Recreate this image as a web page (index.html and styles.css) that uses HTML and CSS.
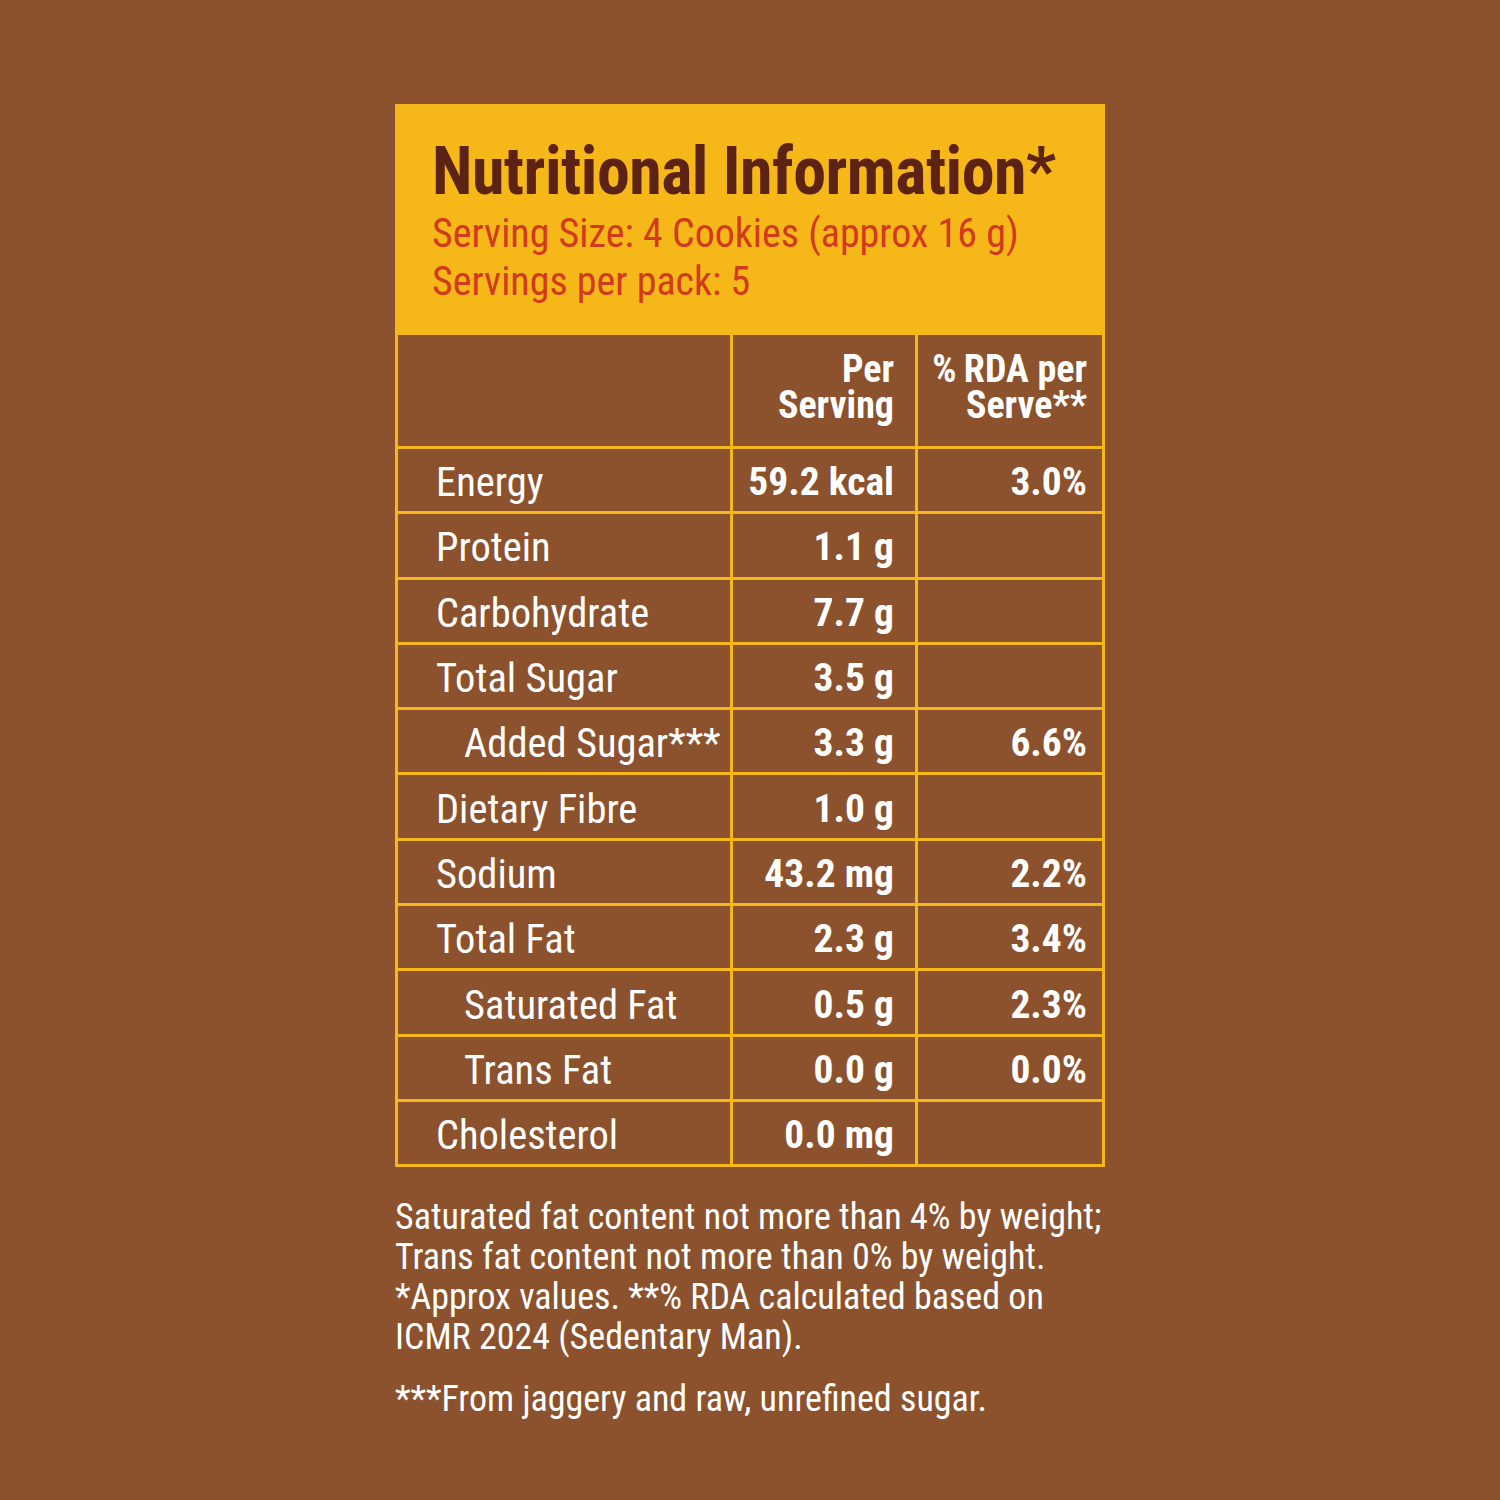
FILE: index.html
```html
<!DOCTYPE html>
<html>
<head>
<meta charset="utf-8">
<link rel="stylesheet" href="styles.css">
</head>
<body>
<div class="page">
  <div class="panel">
    <div class="head">
      <h1 class="title">Nutritional Information*</h1>
      <p class="sub">Serving Size: 4 Cookies (approx 16 g)</p>
      <p class="sub">Servings per pack: 5</p>
    </div>
    <table class="facts">
      <tr class="hdr">
        <th class="c1"></th>
        <th class="c2"><span class="hl">Per</span><span class="hl">Serving</span></th>
        <th class="c3"><span class="hl">%&thinsp;RDA per</span><span class="hl">Serve**</span></th>
      </tr>
      <tr><td class="c1">Energy</td><td class="c2">59.2 kcal</td><td class="c3">3.0%</td></tr>
      <tr><td class="c1">Protein</td><td class="c2">1.1 g</td><td class="c3"></td></tr>
      <tr><td class="c1">Carbohydrate</td><td class="c2">7.7 g</td><td class="c3"></td></tr>
      <tr><td class="c1">Total Sugar</td><td class="c2">3.5 g</td><td class="c3"></td></tr>
      <tr><td class="c1 ind">Added Sugar***</td><td class="c2">3.3 g</td><td class="c3">6.6%</td></tr>
      <tr><td class="c1">Dietary Fibre</td><td class="c2">1.0 g</td><td class="c3"></td></tr>
      <tr><td class="c1">Sodium</td><td class="c2">43.2 mg</td><td class="c3">2.2%</td></tr>
      <tr><td class="c1">Total Fat</td><td class="c2">2.3 g</td><td class="c3">3.4%</td></tr>
      <tr><td class="c1 ind">Saturated Fat</td><td class="c2">0.5 g</td><td class="c3">2.3%</td></tr>
      <tr><td class="c1 ind">Trans Fat</td><td class="c2">0.0 g</td><td class="c3">0.0%</td></tr>
      <tr><td class="c1">Cholesterol</td><td class="c2">0.0 mg</td><td class="c3"></td></tr>
    </table>
    <div class="notes">
      <p>Saturated fat content not more than 4% by weight;<br>Trans fat content not more than 0% by weight.<br>*Approx values. **% RDA calculated based on<br>ICMR 2024 (Sedentary Man).</p>
      <p class="last">***From jaggery and raw, unrefined sugar.</p>
    </div>
  </div>
</div>
</body>
</html>
```
FILE: styles.css
```css
html, body {
  margin: 0;
  padding: 0;
  background: #8b522d;
}
.page {
  width: 1500px;
  height: 1500px;
  background: #8b522d;
  font-family: Roboto, "Liberation Sans", sans-serif;
  font-stretch: 75%;
  color: #fff;
  display: flex;
  justify-content: center;
  padding-top: 104px;
  box-sizing: border-box;
}
.panel {
  width: 710px;
  display: flex;
  flex-direction: column;
}
.head {
  background: #f6b719;
  height: 229px;
  box-sizing: border-box;
  padding: 30px 0 0 37px;
}
.title {
  margin: 0;
  font-size: 66px;
  font-weight: 700;
  color: #5c2314;
  line-height: 76px;
  letter-spacing: -0.5px;
}
.sub {
  margin: 0;
  font-size: 40px;
  line-height: 48px;
  color: #d13a1c;
}
.facts {
  border-collapse: collapse;
  width: 710px;
  table-layout: fixed;
  margin-top: -1px;
}
.facts td, .facts th {
  border: 3px solid #f6b719;
  height: 58.3px;
  padding: 0;
  font-size: 40.5px;
  line-height: 44px;
}
.facts .c1 {
  width: 335px;
  padding-left: 38px;
  font-weight: 400;
  text-align: left;
}
.facts .c1.ind { padding-left: 66px; }
.facts .c2 {
  width: 185px;
  text-align: right;
  padding-right: 21px;
  font-weight: 700;
  font-size: 39.5px;
}
.facts .c3 {
  text-align: right;
  padding-right: 15px;
  font-weight: 700;
  font-size: 39.5px;
}
.facts .hdr th {
  height: 114px;
  font-size: 38px;
  vertical-align: top;
  padding-top: 16px;
  box-sizing: border-box;
}
.hl {
  display: block;
  height: 36px;
  line-height: 36px;
  overflow: visible;
  white-space: nowrap;
}
.facts td { padding-top: 4px; }
.notes {
  margin-top: 30px;
  font-size: 36px;
  line-height: 40px;
  white-space: nowrap;
}
.notes p { margin: 0; }
.notes .last { margin-top: 22px; }
```
